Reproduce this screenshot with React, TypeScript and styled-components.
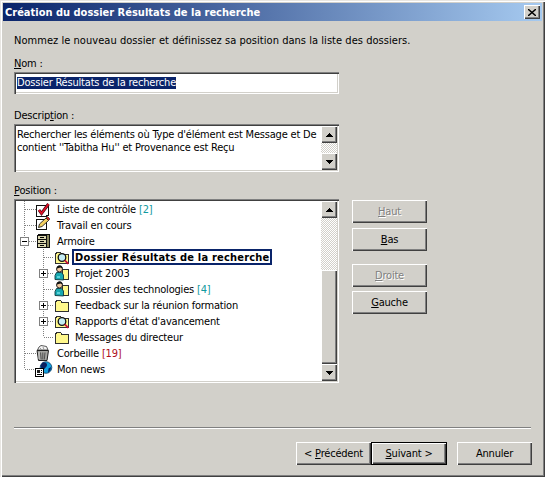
import React from 'react';
import styled, { createGlobalStyle } from 'styled-components';

const GlobalStyle = createGlobalStyle`
  html, body {
    margin: 0;
    padding: 0;
    background: #d2d0ca;
  }
  * {
    box-sizing: border-box;
  }
`;

const FONT = `"DejaVu Sans Condensed", "Liberation Sans", Arial, sans-serif`;

const raised = `
  box-shadow:
    inset 1px 1px 0 #ffffff,
    inset -1px -1px 0 #404040,
    inset -2px -2px 0 #808080;
`;

const sunken = `
  box-shadow:
    inset 1px 1px 0 #808080,
    inset 2px 2px 0 #404040,
    inset -1px -1px 0 #ffffff,
    inset -2px -2px 0 #d2d0ca;
`;

const Window = styled.div`
  width: 545px;
  height: 477px;
  padding: 3px;
  display: flex;
  flex-direction: column;
  background: #d2d0ca;
  font-family: ${FONT};
  font-size: 11px;
  line-height: 13px;
  letter-spacing: -0.2px;
  color: #000;
  box-shadow:
    inset 1px 1px 0 #e8e6e2,
    inset 2px 2px 0 #ffffff,
    inset -1px -1px 0 #404040,
    inset -2px -2px 0 #808080;
`;

const TitleBar = styled.div`
  height: 18px;
  flex: none;
  display: flex;
  align-items: center;
  justify-content: space-between;
  padding: 0 2px;
  background: linear-gradient(90deg, #0a246a 0%, #a6caf0 100%);
  color: #fff;
  font-weight: 700;
  letter-spacing: 0;
`;

const CloseButton = styled.div`
  width: 16px;
  height: 14px;
  display: flex;
  align-items: center;
  justify-content: center;
  background: #d2d0ca;
  ${raised}
`;

const Content = styled.div`
  flex: 1;
  padding: 13px 11px 0;
  display: flex;
  flex-direction: column;
`;

const Intro = styled.div`
  margin-bottom: 10px;
  letter-spacing: 0.04px;
`;

const FieldLabel = styled.div`
  margin-bottom: 2px;
`;

const NameInput = styled.div`
  width: 325px;
  height: 22px;
  padding: 5px 3px 0;
  margin-bottom: 15px;
  background: #fff;
  ${sunken}
`;

const Selection = styled.span`
  display: block;
  width: fit-content;
  height: 12px;
  line-height: 12px;
  background: #0a246a;
  color: #fff;
`;

const DescriptionBox = styled.div`
  width: 325px;
  height: 48px;
  padding: 2px 2px 2px 3px;
  margin-bottom: 12px;
  display: flex;
  justify-content: space-between;
  background: #fff;
  ${sunken}
`;

const DescriptionText = styled.div`
  width: 302px;
  padding-top: 2px;
`;

const ScrollBar = styled.div`
  width: 16px;
  flex: none;
  display: flex;
  flex-direction: column;
  background-color: #ffffff;
  background-image: repeating-conic-gradient(#d2d0ca 0% 25%, #ffffff 0% 50%);
  background-size: 2px 2px;
`;

const ScrollButton = styled.div`
  height: 17px;
  flex: none;
  display: flex;
  align-items: center;
  justify-content: center;
  background: #d2d0ca;
  ${raised}
`;

const ScrollTrack = styled.div<{ $size?: number }>`
  flex: ${p => (p.$size ? `0 0 ${p.$size}px` : '1')};
`;

const ScrollThumb = styled.div`
  flex: 1;
  background: #d2d0ca;
  ${raised}
`;

const PositionRow = styled.div`
  display: flex;
  align-items: flex-start;
  gap: 13px;
`;

const TreeBox = styled.div`
  width: 325px;
  height: 184px;
  padding: 2px;
  display: flex;
  justify-content: space-between;
  background: #fff;
  ${sunken}
`;

const TreeList = styled.ul`
  list-style: none;
  margin: 0;
  padding: 0;
  flex: 1;
`;

const Row = styled.li`
  height: 16px;
  display: flex;
  align-items: center;
`;

const Gutter = styled.svg<{ $level: number }>`
  width: ${p => (p.$level ? 38 : 20)}px;
  height: 16px;
  flex: none;
  display: block;
`;

const IconBox = styled.svg`
  width: 16px;
  height: 16px;
  flex: none;
  display: block;
  overflow: visible;
`;

const Label = styled.span<{ $active?: boolean }>`
  margin-left: 2px;
  height: 16px;
  line-height: 14px;
  white-space: nowrap;
  padding: 0 1px;
  border: 2px solid ${p => (p.$active ? '#0a246a' : 'transparent')};
  font-weight: ${p => (p.$active ? 700 : 400)};
  letter-spacing: ${p => (p.$active ? '0.2px' : '-0.2px')};
`;

const Count = styled.span<{ $color: string }>`
  color: ${p => p.$color};
`;

const SideColumn = styled.div`
  width: 75px;
  margin-top: 1px;
  display: flex;
  flex-direction: column;
`;

const Button = styled.div<{ $disabled?: boolean; $default?: boolean; $after?: number }>`
  height: 23px;
  flex: none;
  display: flex;
  align-items: center;
  justify-content: center;
  white-space: pre;
  background: #d2d0ca;
  margin-bottom: ${p => p.$after ?? 0}px;
  color: ${p => (p.$disabled ? '#808080' : '#000')};
  text-shadow: ${p => (p.$disabled ? '1px 1px 0 #ffffff' : 'none')};
  ${p =>
    p.$default
      ? `box-shadow:
           inset 0 0 0 1px #000000,
           inset 2px 2px 0 #ffffff,
           inset -2px -2px 0 #404040,
           inset -3px -3px 0 #808080;`
      : raised}
`;

const Separator = styled.div`
  height: 2px;
  margin-top: 44px;
  background: #808080;
  border-bottom: 1px solid #ffffff;
`;

const Footer = styled.div`
  margin: 13px -1px 0 0;
  display: flex;
  justify-content: flex-end;
`;

const NavButtons = styled.div`
  display: flex;
  margin-right: 10px;
`;

const WizardButton = styled(Button)<{ $wide?: boolean }>`
  width: ${p => (p.$wide ? 76 : 75)}px;
`;

const Arrow = ({ up }: { up?: boolean }) => (
  <svg width="7" height="4" viewBox="0 0 7 4" shapeRendering="crispEdges">
    <path d={up ? 'M3 0h1v1h1v1h1v1h1v1H0V3h1V2h1V1h1z' : 'M0 0h7v1H6v1H5v1H4v1H3V3H2V2H1V1H0z'} fill="#000" />
  </svg>
);

const Expander = ({ x, open }: { x: number; open?: boolean }) => (
  <g shapeRendering="crispEdges">
    <rect x={x - 3.5} y={4.5} width={8} height={8} fill="#fff" stroke="#808080" />
    <path d={`M${x - 2} 8.5h5`} stroke="#000" />
    {!open && <path d={`M${x + 0.5} 6v5`} stroke="#000" />}
  </g>
);

const dots = { stroke: '#808080', strokeDasharray: '1 1', shapeRendering: 'crispEdges' as const };

// guide lines of the tree, one svg per row
const Guides = ({ level, lastOuter, lastInner, expander, open }: {
  level: number; lastOuter?: boolean; lastInner?: boolean; expander?: boolean; open?: boolean;
}) => (
  <Gutter $level={level} viewBox={`0 0 ${level ? 38 : 20} 16`}>
    <path d={`M8.5 0V${lastOuter ? 8 : 16}`} {...dots} />
    {level === 0 && <path d="M9 8.5H20" {...dots} />}
    {level === 1 && <path d={`M27.5 0V${lastInner ? 8 : 16}`} {...dots} />}
    {level === 1 && <path d="M28 8.5H38" {...dots} />}
    {expander && <Expander x={level ? 27 : 8} open={open} />}
  </Gutter>
);

const ChecklistIcon = () => (
  <IconBox viewBox="0 0 16 16">
    <path d="M.5 4.500h10l2 -1v10.500l-2 1h-10z" fill="#fff" stroke="#101010" shapeRendering="crispEdges" />
    <path d="M3 9l2.500 3.500L12.500 3" fill="none" stroke="#400810" strokeWidth="3" />
    <path d="M3 9l2.500 3.500L12.500 3" fill="none" stroke="#e01028" strokeWidth="1.800" />
  </IconBox>
);

const NoteIcon = () => (
  <IconBox viewBox="0 0 16 16">
    <rect x=".5" y="2.500" width="10" height="10" fill="#fff" stroke="#101010" shapeRendering="crispEdges" />
    <path d="M2.500 10.500l1-3.500 6.500-6 2.500 2.500-6.500 6z" fill="#f4d060" stroke="#202020" strokeWidth="0.900" />
    <path d="M10 1l1.500-1.500 2.500 2.500-1.500 1.500z" fill="#d82020" stroke="#202020" strokeWidth="0.600" />
  </IconBox>
);

const CabinetIcon = () => (
  <IconBox viewBox="0 0 16 16" shapeRendering="crispEdges">
    <path d="M3 1.500h10.500v13H1.500v-12z" fill="#8c8a60" stroke="#101010" />
    <rect x="1.500" y="2.500" width="9" height="12" fill="#dcd8b0" stroke="#101010" />
    <path d="M2 6.500h8M2 10.500h8" stroke="#101010" />
    <rect x="4" y="4" width="4" height="1" fill="#000" />
    <rect x="4" y="8" width="4" height="1" fill="#000" />
    <rect x="4" y="12" width="4" height="1" fill="#000" />
  </IconBox>
);

const folderBody = (
  <path d="M1.500 5.500l1-2h4l1 1.500h7v9.500h-13z" fill="#fff88c" stroke="#303030" strokeWidth="1" shapeRendering="crispEdges" />
);

const FolderIcon = () => <IconBox viewBox="0 0 16 16">{folderBody}</IconBox>;

const SearchFolderIcon = () => (
  <IconBox viewBox="0 0 16 16">
    {folderBody}
    <circle cx="8" cy="8.500" r="3.800" fill="#c4ecf4" stroke="#101010" strokeWidth="1.300" />
    <path d="M10.800 11.300l3.500 3.500" stroke="#c81038" strokeWidth="1.800" />
  </IconBox>
);

const PersonFolderIcon = () => (
  <IconBox viewBox="0 0 16 16">
    <path d="M8.500 4.500h6v9.500h-6z" fill="#fff88c" stroke="#303030" shapeRendering="crispEdges" />
    <circle cx="5.500" cy="4" r="3" fill="#f0c8a0" stroke="#101010" strokeWidth="0.900" />
    <path d="M3 3.500V2l1.500-1.500h2.500l1.500 2v1L6.500 2.500z" fill="#101010" />
    <path d="M1 14.500v-4l1.500-3h5l2 2.500v5z" fill="#18a8b0" stroke="#0c3840" strokeWidth="0.900" />
    <path d="M3 12h3" stroke="#70e0e8" strokeWidth="1.500" />
  </IconBox>
);

const TrashIcon = () => (
  <IconBox viewBox="0 0 16 16">
    <path d="M1.500 5l1.500-3 2-1.500 3 .5 2.500 .5 1.500 3.500z" fill="#f4f4f4" stroke="#303030" strokeWidth="0.800" />
    <path d="M4 3l1.500 1.500M7 2l1 2.500" stroke="#808080" strokeWidth="0.800" />
    <path d="M1 5.500h11.500l-1.500 10h-8.500z" fill="#a4a4a0" stroke="#202020" />
    <path d="M4.500 7.500l.7 7M6.800 7.500v7M9 7.500l-.7 7" stroke="#505050" strokeWidth="1" />
    <path d="M3 7v7" stroke="#e0e0e0" strokeWidth="0.800" />
  </IconBox>
);

const NewsIcon = () => (
  <IconBox viewBox="0 0 16 16">
    <circle cx="10" cy="6.500" r="5.800" fill="#10a0e0" stroke="#083860" strokeWidth="0.800" />
    <path d="M6.500 1.500c2.500 -.5 4.500 .5 4.500 2.500s-2 2.500-2.500 4l-3-.5-1-3zM12.500 7.500l2.500-1.500-.5 3-2.500 3z" fill="#0a2060" />
    <rect x="-.5" y="7.500" width="8" height="8" fill="#fff" stroke="#000" shapeRendering="crispEdges" />
    <rect x="1" y="9" width="3" height="3" fill="#202020" />
    <path d="M1 13.500h5M5 9.500h1M5 11.500h1" stroke="#000" shapeRendering="crispEdges" />
  </IconBox>
);

type TreeItem = {
  label: string;
  level: number;
  icon: React.ComponentType;
  count?: string;
  countColor?: string;
  expander?: boolean;
  open?: boolean;
  active?: boolean;
  lastOuter?: boolean;
  lastInner?: boolean;
};

const items: TreeItem[] = [
  { label: 'Liste de contrôle', level: 0, icon: ChecklistIcon, count: '[2]', countColor: '#109aa0' },
  { label: 'Travail en cours', level: 0, icon: NoteIcon },
  { label: 'Armoire', level: 0, icon: CabinetIcon, expander: true, open: true },
  { label: 'Dossier Résultats de la recherche', level: 1, icon: SearchFolderIcon, active: true },
  { label: 'Projet 2003', level: 1, icon: PersonFolderIcon, expander: true },
  { label: 'Dossier des technologies', level: 1, icon: PersonFolderIcon, count: '[4]', countColor: '#109aa0' },
  { label: 'Feedback sur la réunion formation', level: 1, icon: FolderIcon, expander: true },
  { label: "Rapports d'état d'avancement", level: 1, icon: SearchFolderIcon, expander: true },
  { label: 'Messages du directeur', level: 1, icon: FolderIcon, lastInner: true },
  { label: 'Corbeille', level: 0, icon: TrashIcon, count: '[19]', countColor: '#b01020' },
  { label: 'Mon news', level: 0, icon: NewsIcon, lastOuter: true },
];

export default function App() {
  return (
    <>
      <GlobalStyle />
      <Window>
        <TitleBar>
          <span>Création du dossier Résultats de la recherche</span>
          <CloseButton>
            <svg width="8" height="7" viewBox="0 0 8 7">
              <path d="M0 0l8 7M8 0L0 7" stroke="#000" strokeWidth="1.400" />
            </svg>
          </CloseButton>
        </TitleBar>
        <Content>
          <Intro>Nommez le nouveau dossier et définissez sa position dans la liste des dossiers.</Intro>
          <FieldLabel><u>N</u>om :</FieldLabel>
          <NameInput><Selection>Dossier Résultats de la recherche</Selection></NameInput>
          <FieldLabel>Descrip<u>t</u>ion :</FieldLabel>
          <DescriptionBox>
            <DescriptionText>
              Rechercher les éléments où Type d'élément est Message et De contient ''Tabitha Hu'' et Provenance est Reçu
            </DescriptionText>
            <ScrollBar>
              <ScrollButton><Arrow up /></ScrollButton>
              <ScrollTrack />
              <ScrollButton><Arrow /></ScrollButton>
            </ScrollBar>
          </DescriptionBox>
          <FieldLabel><u>P</u>osition :</FieldLabel>
          <PositionRow>
            <TreeBox>
              <TreeList>
                {items.map(item => {
                  const Icon = item.icon;
                  return (
                    <Row key={item.label}>
                      <Guides
                        level={item.level}
                        lastOuter={item.lastOuter}
                        lastInner={item.lastInner}
                        expander={item.expander}
                        open={item.open}
                      />
                      <Icon />
                      <Label $active={item.active}>
                        {item.label}
                        {item.count && <Count $color={item.countColor!}> {item.count}</Count>}
                      </Label>
                    </Row>
                  );
                })}
              </TreeList>
              <ScrollBar>
                <ScrollButton><Arrow up /></ScrollButton>
                <ScrollTrack $size={52} />
                <ScrollThumb />
                <ScrollButton><Arrow /></ScrollButton>
              </ScrollBar>
            </TreeBox>
            <SideColumn>
              <Button $disabled $after={5}><span><u>H</u>aut</span></Button>
              <Button $after={13}><span><u>B</u>as</span></Button>
              <Button $disabled $after={4}><span><u>D</u>roite</span></Button>
              <Button><span><u>G</u>auche</span></Button>
            </SideColumn>
          </PositionRow>
          <Separator />
          <Footer>
            <NavButtons>
              <WizardButton><span>&lt; <u>P</u>récédent</span></WizardButton>
              <WizardButton $default $wide><span><u>S</u>uivant &gt;</span></WizardButton>
            </NavButtons>
            <WizardButton>Annuler</WizardButton>
          </Footer>
        </Content>
      </Window>
    </>
  );
}
